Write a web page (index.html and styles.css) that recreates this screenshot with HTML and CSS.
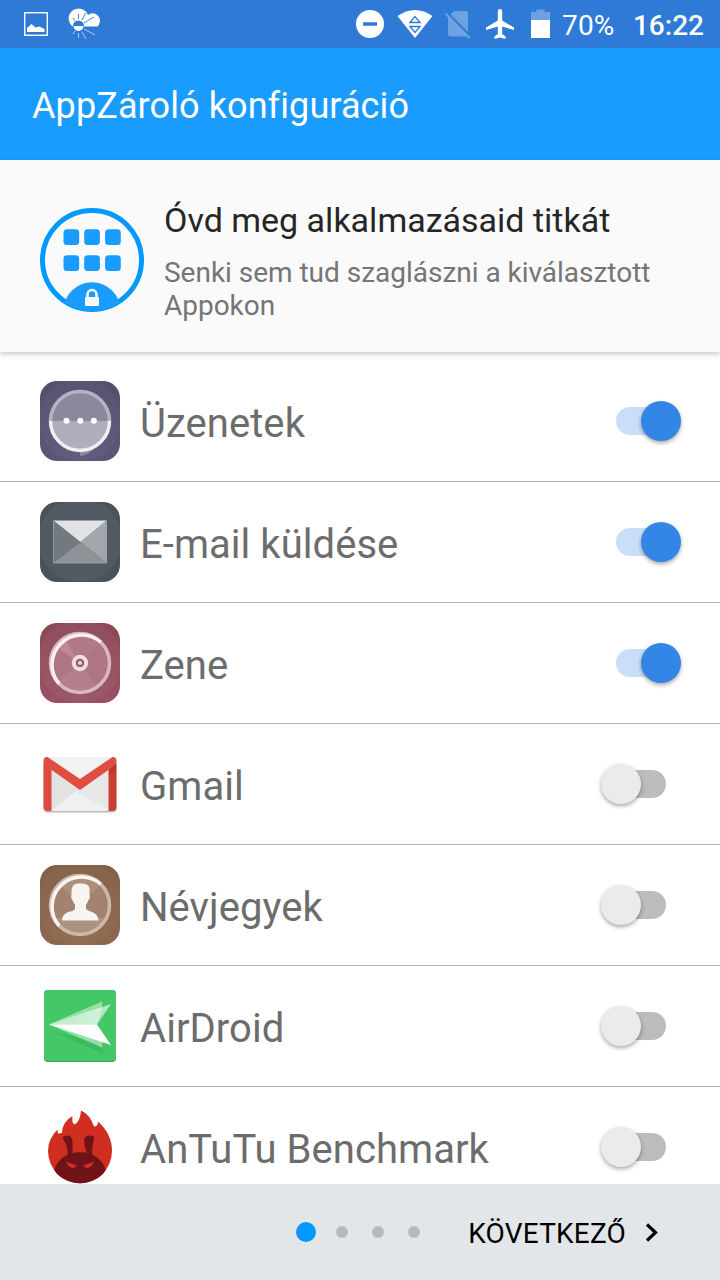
FILE: index.html
```html
<!DOCTYPE html>
<html lang="hu">
<head>
  <meta charset="UTF-8" />
  <meta name="viewport" content="width=device-width, initial-scale=1.0" />
  <title>AppZároló konfiguráció</title>
  <link rel="stylesheet" href="styles.css">
</head>
<body>

  <div class="status-bar">
    <svg class="status-icons" width="110" height="48" viewBox="0 0 110 48">
      <rect x="24.7" y="12.7" width="22.6" height="22.6" fill="none" stroke="#fff" stroke-width="1.4" />
      <path d="M27 32v-4l4.500-4 4 3.500 4-1 5 2.500v3z" fill="#fff" />
      <path d="M72 26a10 10 0 1 1 16-11a7.300 7.300 0 0 1 11.500 8q-.500 3-2 3.500H74z" fill="#fff" />
      <path d="M78.500 14v5M85.500 13l-3.500 7M94 17l-10 6M73 18l2 3" stroke="#2f7ad6" stroke-width=".9" />
      <circle cx="78.500" cy="26" r="5.500" fill="#2f7ad6" />
      <path d="M73.500 26h10a5 5 0 0 1-10 0z" fill="#fff" />
      <path d="M78.500 33v5M82 32l4 7M84 29l11 6M75 31l-2 3" stroke="#fff" stroke-width=".9" opacity=".7" />
    </svg>
    <svg class="status-icons status-right" width="220" height="48" viewBox="340 0 220 48">
      <circle cx="370" cy="24" r="14" fill="#fff" />
      <path d="M363 24h14" stroke="#2f7ad6" stroke-width="3.500" />
      <path d="M397.500 16q17.500-12 35 0L415 38z" fill="#fff" />
      <path d="M410 22.500l5-6 5 6zM410 26.500h10l-5 6z" fill="none" stroke="#2f7ad6" stroke-width="1.400" />
      <path d="M454 11h12q2 0 2 2v19L450.500 14.500zM448 17.500L467 36.500h-17q-2 0-2-2z" fill="#fff" opacity=".3" />
      <path d="M445.500 13.500l24 24.500" stroke="#fff" stroke-width="2" opacity=".3" />
      <path d="M497.800 11q0-2 2.200-2t2.200 2v9.500l11.800 7V30l-11.800-3.500v7.500l3.300 2.500V39L500 37.500 494.500 39v-2.500l3.300-2.500v-7.500L486 30v-2.500l11.800-7z" fill="#fff" />
      <path d="M531 20v-8h5.500V9.500h8V12h5.500v8z" fill="#fff" opacity=".3" />
      <rect x="531" y="20" width="19" height="18" fill="#fff" />
    </svg>
    <span class="battery">70%</span>
    <span class="clock">16:22</span>
  </div>

  <header class="app-bar">
    <h1>AppZároló konfiguráció</h1>
  </header>

  <section class="intro">
    <svg class="intro-icon" width="104" height="104" viewBox="0 0 104 104">
      <clipPath id="ring"><circle cx="52" cy="52" r="51" /></clipPath>
      <circle cx="52" cy="52" r="49.500" fill="none" stroke="#0099ff" stroke-width="5" />
      <g fill="#1a9cff">
        <rect x="23.500" y="21.300" width="15.700" height="15.700" rx="3.500" />
        <rect x="44.200" y="21.300" width="15.700" height="15.700" rx="3.500" />
        <rect x="65.100" y="21.300" width="15.700" height="15.700" rx="3.500" />
        <rect x="23.500" y="47.200" width="15.700" height="15.700" rx="3.500" />
        <rect x="44.200" y="47.200" width="15.700" height="15.700" rx="3.500" />
        <rect x="65.100" y="47.200" width="15.700" height="15.700" rx="3.500" />
        <circle cx="52" cy="103" r="28.700" clip-path="url(#ring)" />
      </g>
      <rect x="45" y="89" width="14" height="9" rx="1" fill="#fafafa" />
      <path d="M47.500 90v-3.500a4.500 4.500 0 0 1 9 0V90" fill="none" stroke="#fafafa" stroke-width="2.600" />
    </svg>
    <div class="intro-text">
      <h2>Óvd meg alkalmazásaid titkát</h2>
      <p>Senki sem tud szaglászni a kiválasztott Appokon</p>
    </div>
  </section>

  <main class="app-list">
    <div class="app-row">
      <svg class="app-icon" viewBox="0 0 80 80">
        <clipPath id="tile"><rect width="80" height="80" rx="17" /></clipPath>
        <linearGradient id="purple" x2="0" y2="1"><stop stop-color="#524e6c" /><stop offset="1" stop-color="#5b5776" /></linearGradient>
        <g clip-path="url(#tile)">
          <rect width="80" height="80" fill="url(#purple)" />
          <circle cx="40" cy="38" r="42" fill="#fff" opacity=".03" />
          <path d="M40 70v5q8-1 14-7z" fill="#8c899d" />
        </g>
        <circle cx="40" cy="40" r="29" fill="#8b889e" />
        <path d="M11 40h58a29 29 0 0 1-58 0z" fill="#b0aebd" />
        <path d="M10.500 40a29.500 29.500 0 0 1 59 0" fill="none" stroke="#b5b3c0" stroke-width="3.500" />
        <path d="M10.500 40a29.500 29.500 0 0 0 59 0" fill="none" stroke="#efeff2" stroke-width="3.500" />
        <g fill="#fff"><circle cx="26.500" cy="39.700" r="3" /><circle cx="40.300" cy="39.700" r="3" /><circle cx="53.900" cy="39.700" r="3" /></g>
      </svg>
      <span class="app-name">Üzenetek</span>
      <span class="switch on"></span>
    </div>

    <div class="app-row">
      <svg class="app-icon" viewBox="0 0 80 80">
        <g clip-path="url(#tile)">
          <rect width="80" height="80" fill="#4a525b" />
          <circle cx="40" cy="38" r="42" fill="#515a63" />
        </g>
        <path d="M13.500 18.500L40.500 40l-27 21z" fill="#747980" />
        <path d="M66.500 18.500L40.500 40l26 21z" fill="#a3a6aa" />
        <path d="M13.500 61L40.500 40l26 21z" fill="#8f9397" />
        <path d="M13.500 18.500h53L40.500 40z" fill="#e0e2e4" />
        <path d="M13.500 18.500v42.500h53V18.500" fill="none" stroke="#aaadb1" stroke-width=".7" />
      </svg>
      <span class="app-name">E-mail küldése</span>
      <span class="switch on"></span>
    </div>

    <div class="app-row">
      <svg class="app-icon" viewBox="0 0 80 80">
        <linearGradient id="wine" x2="0" y2="1"><stop stop-color="#8c4857" /><stop offset="1" stop-color="#985264" /></linearGradient>
        <g clip-path="url(#tile)">
          <rect width="80" height="80" fill="url(#wine)" />
          <circle cx="40" cy="38" r="42" fill="#fff" opacity=".04" />
        </g>
        <circle cx="40" cy="40" r="29" fill="#b07583" />
        <path d="M40 40L16 23.500A29 29 0 0 1 24.500 15.500z" fill="#bc8995" />
        <path d="M40 40L24.500 15.500A29 29 0 0 1 60 19z" fill="#b27987" />
        <path d="M40 40L18 58A29 29 0 0 0 56 64z" fill="#b67e8b" />
        <circle cx="40" cy="40" r="29.500" fill="none" stroke="#d7b9c0" stroke-width="3.500" />
        <path d="M19.200 60.800A29.500 29.500 0 0 1 60.800 19.200" fill="none" stroke="#f7eff1" stroke-width="3.500" />
        <circle cx="40" cy="40" r="6.200" fill="#b07583" stroke="#ecdfe2" stroke-width="4" />
        <circle cx="40" cy="40" r="3" fill="#e9dce0" stroke="#9d5c6b" stroke-width="2" />
      </svg>
      <span class="app-name">Zene</span>
      <span class="switch on"></span>
    </div>

    <div class="app-row">
      <svg class="app-icon" viewBox="0 0 80 80">
        <linearGradient id="side" x2="0" y2="1"><stop stop-color="#b93428" /><stop offset=".3" stop-color="#cb3f31" /></linearGradient>
        <rect x="3.500" y="14.500" width="73" height="54" rx="4" fill="#bbb" />
        <rect x="3.500" y="13" width="73" height="54" rx="4" fill="#f2f2f2" />
        <path d="M11 24L40 46 11 66z" fill="#e2e2e2" />
        <path d="M11 67l25-20 4-1 29 21z" fill="#f0f0f0" />
        <path d="M40 46L69 24v42L36 48z" fill="#e8e8e8" />
        <path d="M3.500 19l8 5v43h-4q-4 0-4-4z" fill="#dd4b3e" />
        <path d="M76.500 19l-8 5v43h4q4 0 4-4z" fill="url(#side)" />
        <path d="M7.500 13L40 35 72.500 13q4 0 4 4 0 3-2.500 5L40 46 6 22q-2.500-2-2.500-5 0-4 4-4z" fill="#df4d40" />
      </svg>
      <span class="app-name">Gmail</span>
      <span class="switch"></span>
    </div>

    <div class="app-row">
      <svg class="app-icon" viewBox="0 0 80 80">
        <linearGradient id="brown" x2="0" y2="1"><stop stop-color="#836046" /><stop offset="1" stop-color="#8d684e" /></linearGradient>
        <g clip-path="url(#tile)">
          <rect width="80" height="80" fill="url(#brown)" />
          <circle cx="40" cy="38" r="42" fill="#fff" opacity=".03" />
        </g>
        <circle cx="40" cy="40" r="29" fill="#a2836d" />
        <path d="M40 40L20 20a29 29 0 0 1 40 0z" fill="#ad907c" />
        <path d="M14 53h52a29 29 0 0 1-52 0z" fill="#ae9280" />
        <circle cx="40" cy="40" r="29.500" fill="none" stroke="#cbb9ab" stroke-width="3.500" />
        <path d="M19.200 60.800A29.500 29.500 0 0 1 60.800 19.200" fill="none" stroke="#f7f4f2" stroke-width="3.500" />
        <path d="M33 21q1-2.500 6-2.500 10-.500 10.500 5v6q1 4-1 5.500-.500 2.500-2.500 4.500v4q1 2 6 3.500 6 2 6.500 8.500h-36.500q0-6 6-8.500 6-1 7-3.500v-4q-2-2-2.500-4.500-2-2-1-5.500-.500-6 1.500-8.500z" fill="#f7f4f2" />
      </svg>
      <span class="app-name">Névjegyek</span>
      <span class="switch"></span>
    </div>

    <div class="app-row">
      <svg class="app-icon" viewBox="0 0 80 80">
        <linearGradient id="wing" x1="0" x2="1" y2="0"><stop stop-color="#fff" stop-opacity=".5" /><stop offset="1" stop-color="#fff" stop-opacity=".8" /></linearGradient>
        <rect x="4" y="4" width="72" height="72" rx="4" fill="#35a652" />
        <rect x="4" y="4" width="72" height="71" rx="4" fill="#44c767" />
        <path d="M14 46l50 22-7-12z" fill="#3dba5e" />
        <path d="M9 38.500L62 15.500v8L57 38.500l5 15v8z" fill="#fff" opacity=".45" />
        <path d="M9 38.500L71 18 57 38.500z" fill="url(#wing)" opacity=".75" />
        <path d="M9 38.500h48L71 59z" fill="#fff" />
      </svg>
      <span class="app-name">AirDroid</span>
      <span class="switch"></span>
    </div>

    <div class="app-row">
      <svg class="app-icon" viewBox="0 0 80 80">
        <clipPath id="head"><circle cx="40" cy="44.500" r="32" /></clipPath>
        <path d="M17.500 22.500q0 2 .500 4l4-.500Q22 15 32.500 9q-1 7 2 8.500Q40 15 41 3.500q9 4 13 16 4 0 4-5Q72 27 72 44a32 32 0 0 1-64 0q0-12 9.500-21.500z" fill="#d12e22" />
        <g fill="#701319">
          <ellipse cx="40" cy="67" rx="26" ry="22" clip-path="url(#head)" />
          <path d="M23 32q-1-3.500 4-3.500 5 0 5.500 5v15l-5 1q1-10-4.500-17.500zM54 32q1-3.500-4-3.500-5 0-6 3.500 0 8 3.500 16l5 1q-1-9 1.500-17z" />
        </g>
        <path d="M26 54.500l10.500 4q-1 2.500-4 2.500-4 0-6.500-6.500zM54 54.500l-10.500 4q1 2.500 4 2.500 4 0 6.500-6.500z" fill="#d12e22" />
      </svg>
      <span class="app-name">AnTuTu Benchmark</span>
      <span class="switch"></span>
    </div>
  </main>

  <footer class="bottom-bar">
    <div class="dots">
      <span class="dot active"></span>
      <span class="dot"></span>
      <span class="dot"></span>
      <span class="dot"></span>
    </div>
    <button class="next">KÖVETKEZŐ
      <svg width="14" height="20" viewBox="0 0 14 20"><path d="M2 1.500l8.500 8L2 17.500" fill="none" stroke="#000" stroke-width="3.200" /></svg>
    </button>
  </footer>

</body>
</html>
```
FILE: styles.css
```css
* {
  box-sizing: border-box;
}

body {
  font-family: Roboto, sans-serif;
  margin: 0;
  height: 1280px;
  display: flex;
  flex-direction: column;
  overflow: hidden;
  background: #fff;
}

h1, h2, p {
  margin: 0;
  font-weight: 400;
}

.status-bar {
  flex: none;
  display: flex;
  align-items: center;
  height: 48px;
  padding-right: 16px;
  background: #2f7ad6;
  color: #fff;
  font-size: 28px;
  line-height: 48px;
}

.status-right {
  margin-left: auto;
}

.battery {
  width: 73px;
  padding: 4px 0 0 2px;
  letter-spacing: 0.2px;
}

.clock {
  padding-top: 4px;
  font-weight: 500;
}

.app-bar {
  flex: none;
  display: flex;
  align-items: center;
  height: 112px;
  padding: 4px 32px 0;
  background: #1a9cff;
  color: #fff;
}

.app-bar h1 {
  font-size: 36px;
  letter-spacing: 0.1px;
}

.intro {
  flex: none;
  display: flex;
  gap: 20px;
  height: 192px;
  padding: 40px 40px 0;
  background: #fafafa;
  box-shadow: 0 2px 5px rgba(0, 0, 0, 0.22);
}

.intro-icon {
  flex: none;
  margin-top: 8px;
}

.intro h2 {
  color: #262626;
  font-size: 34px;
  line-height: 40px;
}

.intro p {
  margin-top: 16px;
  color: #757575;
  font-size: 28px;
  line-height: 33px;
  letter-spacing: -0.02px;
}

.app-list {
  flex: 1;
  min-height: 0;
  padding-top: 9px;
  overflow: hidden;
}

.app-row {
  display: flex;
  align-items: center;
  height: 121px;
  padding: 0 38px 0 40px;
  border-bottom: 1px solid #b4b4b4;
}

.app-icon {
  flex: none;
  width: 80px;
  height: 80px;
}

.app-name {
  flex: 1;
  padding: 4px 0 0 20px;
  color: #6c6c6c;
  font-size: 40px;
  letter-spacing: 0.05px;
}

.switch {
  display: flex;
  align-items: center;
  width: 50px;
  height: 28px;
  margin-right: 16px;
  border-radius: 14px;
  background: #bcbcbc;
}

.switch::before {
  content: "";
  flex: none;
  width: 40px;
  height: 40px;
  margin-left: -15px;
  border-radius: 50%;
  background: #ebebeb;
  box-shadow: 0 2px 4px rgba(0, 0, 0, 0.35);
}

.switch.on {
  background: #c9dff9;
}

.switch.on::before {
  margin-left: 25px;
  background: #3385e6;
}

.bottom-bar {
  flex: none;
  display: flex;
  align-items: center;
  justify-content: flex-end;
  height: 96px;
  padding-right: 61px;
  background: #e2e6e9;
}

.dots {
  display: flex;
  align-items: center;
  gap: 24px;
  margin-right: 48px;
}

.dot {
  width: 12px;
  height: 12px;
  border-radius: 50%;
  background: #bababa;
}

.dot.active {
  width: 20px;
  height: 20px;
  margin-right: -4px;
  background: #0099ff;
}

.next {
  display: flex;
  align-items: center;
  gap: 19px;
  padding: 2px 0 0;
  border: none;
  background: none;
  color: #000;
  font: 28px Roboto, sans-serif;
  letter-spacing: 0.2px;
}
```
